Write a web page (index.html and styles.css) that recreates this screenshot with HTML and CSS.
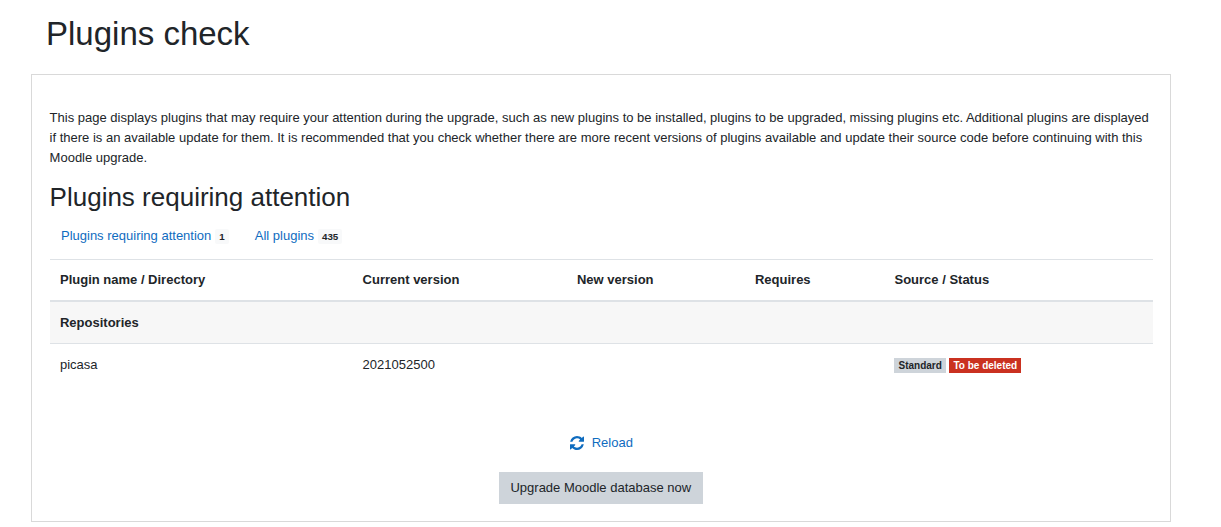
FILE: index.html
```html
<!DOCTYPE html>
<html lang="en">
<head>
<meta charset="utf-8">
<title>Plugins check</title>
<link rel="stylesheet" href="styles.css">
</head>
<body>
<header class="page-header"><h1>Plugins check</h1></header>
<main class="card">
  <p class="intro">This page displays plugins that may require your attention during the upgrade, such as new plugins to be installed, plugins to be upgraded, missing plugins etc. Additional plugins are displayed if there is an available update for them. It is recommended that you check whether there are more recent versions of plugins available and update their source code before continuing with this Moodle upgrade.</p>
  <h2>Plugins requiring attention</h2>
  <nav class="filters">
    <a href="#">Plugins requiring attention</a><span class="count">1</span>
    <a href="#" class="second">All plugins</a><span class="count">435</span>
  </nav>
  <table class="plugins">
    <thead>
      <tr><th class="c1">Plugin name / Directory</th><th class="c2">Current version</th><th class="c3">New version</th><th class="c4">Requires</th><th>Source / Status</th></tr>
    </thead>
    <tbody>
      <tr class="group"><th colspan="5">Repositories</th></tr>
      <tr><td>picasa</td><td>2021052500</td><td></td><td></td><td><span class="badge standard">Standard</span> <span class="badge danger">To be deleted</span></td></tr>
    </tbody>
  </table>
  <div class="reload"><a href="#"><svg class="icon" viewBox="128 128 1536 1536" aria-hidden="true"><path fill="currentColor" d="M1639 1056q0 5-1 7-64 268-268 434.5t-478 166.5q-146 0-282.5-55t-243.5-157l-129 129q-19 19-45 19t-45-19-19-45v-448q0-26 19-45t45-19h448q26 0 45 19t19 45-19 45l-137 137q71 66 161 102t187 36q134 0 250-65t186-179q11-17 53-117 8-23 30-23h192q13 0 22.5 9.5t9.5 22.5zm25-800v448q0 26-19 45t-45 19h-448q-26 0-45-19t-19-45 19-45l138-138q-148-137-349-137-134 0-250 65t-186 179q-11 17-53 117-8 23-30 23h-199q-13 0-22.5-9.5t-9.5-22.5v-7q65-268 270-434.5t480-166.5q146 0 284 55.5t245 156.5l130-129q19-19 45-19t45 19 19 45z"/></svg>Reload</a></div>
  <div class="actions"><button type="button">Upgrade Moodle database now</button></div>
</main>
</body>
</html>
```
FILE: styles.css
```css
* { box-sizing: border-box; }
html, body { margin: 0; padding: 0; }
body {
  font-family: "Liberation Sans", Arial, sans-serif;
  font-size: 13px;
  line-height: 20px;
  color: #212529;
  background: #fff;
  height: 527px;
  overflow: hidden;
}
.page-header { padding: 14px 0 0 46px; height: 74px; }
h1 { margin: 0; font-size: 33px; line-height: 40px; font-weight: 400; }
.card {
  width: 1140px;
  height: 448px;
  margin-left: 31px;
  border: 1px solid #d9d9d9;
  padding: 33px 18px 0 17.6px;
}
.intro { margin: 0; }
h2 { margin: 13px 0 0; font-size: 26px; line-height: 32px; font-weight: 400; }
.filters { display: flex; align-items: center; height: 20px; margin-top: 13px; padding-left: 11.4px; }
a { color: #0f6cbf; text-decoration: none; }
.count {
  margin-left: 4px;
  padding: 2px 4px;
  background: #f8f9fa;
  font-size: 9.75px;
  line-height: 11px;
  font-weight: 700;
  border-radius: 2px;
}
.second { margin-left: 26px; }
.plugins { width: 1103px; margin: 13px 0 0 0.4px; border-collapse: collapse; table-layout: fixed; }
.plugins th, .plugins td { padding: 10px; text-align: left; vertical-align: top; }
.plugins thead th { border-top: 1px solid #dee2e6; border-bottom: 2px solid #dee2e6; height: 41px; }
.plugins tbody tr > * { border-bottom: 1px solid #dee2e6; height: 42px; padding-top: 11px; }
.plugins tbody tr:last-child > * { border-bottom: 0; }
.group th { background: #f7f7f7; }
.c1 { width: 302.6px; }
.c2 { width: 214.4px; }
.c3 { width: 178px; }
.c4 { width: 139.5px; }
.badge {
  display: inline-block;
  font-size: 10px;
  font-weight: 700;
  line-height: 11px;
  padding: 2px 4px;
}
.standard { background: #ced4da; color: #212529; }
.danger { background: #ca3120; color: #fff; }
.reload { margin-top: 47px; text-align: center; }
.reload a { display: inline-flex; align-items: center; padding-left: 1px; }
.icon { width: 14px; height: 14px; margin-right: 8px; }
.actions { margin-top: 16px; text-align: center; }
button {
  font: inherit;
  color: #212529;
  background: #ced4da;
  border: 0;
  width: 204px;
  height: 32px;
  padding: 0;
}
```
